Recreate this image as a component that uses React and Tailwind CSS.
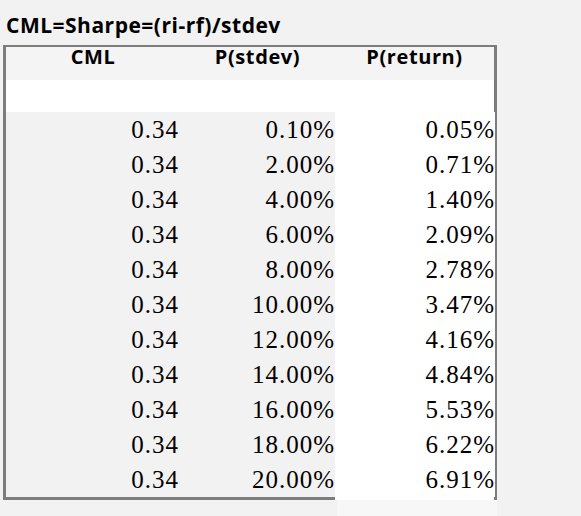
const rows = [
  ["0.34", "0.10%", "0.05%"],
  ["0.34", "2.00%", "0.71%"],
  ["0.34", "4.00%", "1.40%"],
  ["0.34", "6.00%", "2.09%"],
  ["0.34", "8.00%", "2.78%"],
  ["0.34", "10.00%", "3.47%"],
  ["0.34", "12.00%", "4.16%"],
  ["0.34", "14.00%", "4.84%"],
  ["0.34", "16.00%", "5.53%"],
  ["0.34", "18.00%", "6.22%"],
  ["0.34", "20.00%", "6.91%"],
];

const sans = "font-['Open_Sans','Liberation_Sans',sans-serif]";
const serif = "font-['Liberation_Serif','Times_New_Roman',serif]";

export default function App() {
  return (
    <div className="w-[581px] h-[516px] bg-[#f2f2f2] overflow-hidden text-black">
      {/* title */}
      <div className={`h-[45px] pl-[6px] pt-[13px] text-[21px] leading-[24px] tracking-[0.5px] font-bold ${sans}`}>
        CML=Sharpe=(ri-rf)/stdev
      </div>

      {/* table box */}
      <div className="ml-[3px] w-[494px] border-x-[3px] border-t-2 border-[#7d7d7d]">
        <div className={`grid grid-cols-[174px_155px_159px] h-[33px] pt-px bg-[#f4f4f4] text-[20px] leading-[17px] tracking-[0.6px] font-bold ${sans}`}>
          <div className="text-center">CML</div>
          <div className="text-center">P(stdev)</div>
          <div className="text-center">P(return)</div>
        </div>
        <div className="h-[32px] bg-white" />
        {rows.map((r, i) => (
          <div
            key={i}
            className={`grid grid-cols-[174px_155px_159px] h-[35px] text-[25px] leading-[35px] tracking-[1px] ${serif}`}
          >
            <div className="text-right pr-px bg-[#f2f2f2]">{r[0]}</div>
            <div className="text-right bg-[#f2f2f2]">{r[1]}</div>
            <div className="text-right -mr-px bg-white">{r[2]}</div>
          </div>
        ))}
        {/* bottom edge: border under the first two columns only */}
        <div className="flex h-[3px]">
          <div className="w-[329px] bg-[#7d7d7d]" />
          <div className="flex-1 bg-white" />
        </div>
      </div>
      <div className="ml-[337px] w-[160px] h-[16px] bg-[#f7f7f7]" />
    </div>
  );
}
